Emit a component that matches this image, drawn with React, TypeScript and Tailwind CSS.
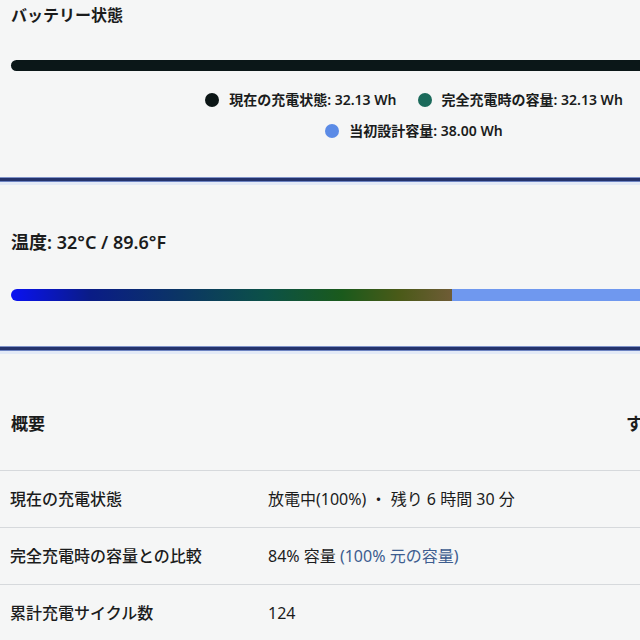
const font = {
  fontFamily: '"Noto Sans", "Noto Sans CJK JP", sans-serif',
};

type LegendItem = { color: string; label: string; value: string };

function Legend({ items }: { items: LegendItem[] }) {
  return (
    <div className="flex justify-center gap-[21px]">
      {items.map((item) => (
        <div key={item.label} className="flex items-center gap-[10px]">
          <span className={`w-[14px] h-[14px] rounded-full ${item.color}`} />
          <span className="text-[14px] leading-[20px] font-semibold text-[#1a1c1c]">
            {item.label}: {item.value}
          </span>
        </div>
      ))}
    </div>
  );
}

function Separator() {
  return (
    <div className="w-full">
      <div className="h-[1px] bg-[#7f93c8]" />
      <div className="h-[3px] bg-[#24336c]" />
      <div className="h-[1px] bg-[#6d84c2]" />
      <div className="h-[3px] bg-[#e3eaf7]" />
    </div>
  );
}

const rows = [
  { label: "現在の充電状態", value: <>放電中(100%) ・ 残り 6 時間 30 分</> },
  {
    label: "完全充電時の容量との比較",
    value: (
      <>
        84% 容量 <span className="text-[#3d5d8f]">(100% 元の容量)</span>
      </>
    ),
  },
  { label: "累計充電サイクル数", value: <>124</> },
];

export default function App() {
  return (
    <div
      className="w-[640px] h-[640px] overflow-hidden bg-[#f5f6f6] text-[#1b1c1c]"
      style={font}
    >
      <div className="w-[828px]">
        {/* battery state */}
        <div className="px-[11px] pt-[3px]">
          <h1 className="text-[16px] leading-[24px] font-bold">バッテリー状態</h1>
          <div className="mt-[33px] h-[11px] rounded-full bg-[#0b1718]" />
          <div className="mt-[19px] flex flex-col gap-[11px]">
            <Legend
              items={[
                { color: "bg-[#0c1616]", label: "現在の充電状態", value: "32.13 Wh" },
                { color: "bg-[#1b6a5b]", label: "完全充電時の容量", value: "32.13 Wh" },
              ]}
            />
            <Legend
              items={[{ color: "bg-[#5b8be6]", label: "当初設計容量", value: "38.00 Wh" }]}
            />
          </div>
        </div>
        <div className="mt-[36px]">
          <Separator />
        </div>

        {/* temperature */}
        <div className="px-[11px]">
          <div className="mt-[45px] text-[18px] leading-[24px] font-semibold">
            温度: 32°C / 89.6°F
          </div>
          <div className="mt-[35px] flex h-[12px]">
            <div className="w-[441px] h-full rounded-l-full bg-[linear-gradient(to_right,#0a12f2_0%,#0a1c86_18%,#0b3565_38%,#0c5147_58%,#1a5a1c_75%,#4a5a18_88%,#6f5c36_100%)]" />
            <div className="flex-1 h-full bg-[#6f98ef]" />
          </div>
        </div>
        <div className="mt-[45px]">
          <Separator />
        </div>

        {/* summary */}
        <div className="mt-[58px] px-[11px] flex items-center text-[17px] leading-[24px] font-bold">
          <span className="w-[615px]">概要</span>
          <span>すべての設定を表示</span>
        </div>
        <div className="mt-[34px]">
          {rows.map((row) => (
            <div
              key={row.label}
              className="flex items-center h-[57px] px-[10px] border-t border-[#d6d9dc] text-[16px]"
            >
              <span className="w-[258px] font-medium">{row.label}</span>
              <span>{row.value}</span>
            </div>
          ))}
        </div>
      </div>
    </div>
  );
}
